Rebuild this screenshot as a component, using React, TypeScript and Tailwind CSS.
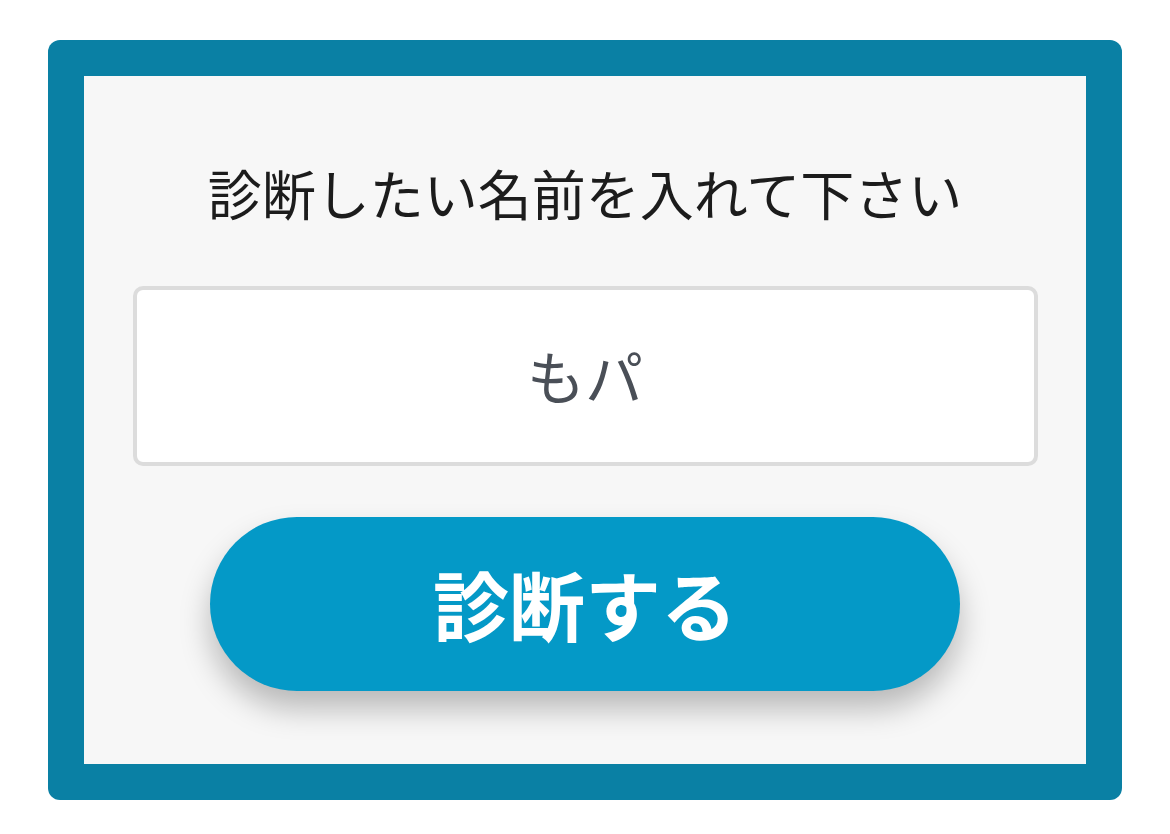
// Name diagnosis form card

const jp = { fontFamily: '"Noto Sans CJK JP", "Noto Sans", sans-serif' };

export default function App() {
  return (
    <div className="min-h-[834px] w-[1170px] bg-white pt-[40px] pl-[48px]" style={jp}>
      {/* Teal frame */}
      <div className="w-[1074px] h-[760px] rounded-[12px] bg-[#0a80a4] p-[36px]">
        <div className="h-full bg-[#f7f7f7] flex flex-col items-center pt-[78px]">
          <h1 className="text-[54px] leading-[78px] text-[#1c1c1c] font-normal">
            診断したい名前を入れて下さい
          </h1>

          {/* Name input */}
          <div className="mt-[54px] w-[905px] h-[180px] bg-white border-[4px] border-[#dcdcdc] rounded-[10px] flex items-center justify-center">
            <span className="text-[58px] leading-[1.2] text-[#4a4f57]">もパ</span>
          </div>

          {/* Submit */}
          <button className="mt-[51px] w-[750px] h-[174px] rounded-full bg-[#0499c7] text-white text-[76px] leading-[1.2] font-bold flex items-center justify-center shadow-[0_18px_30px_rgba(0,0,0,0.25)]">
            診断する
          </button>
        </div>
      </div>
    </div>
  );
}
